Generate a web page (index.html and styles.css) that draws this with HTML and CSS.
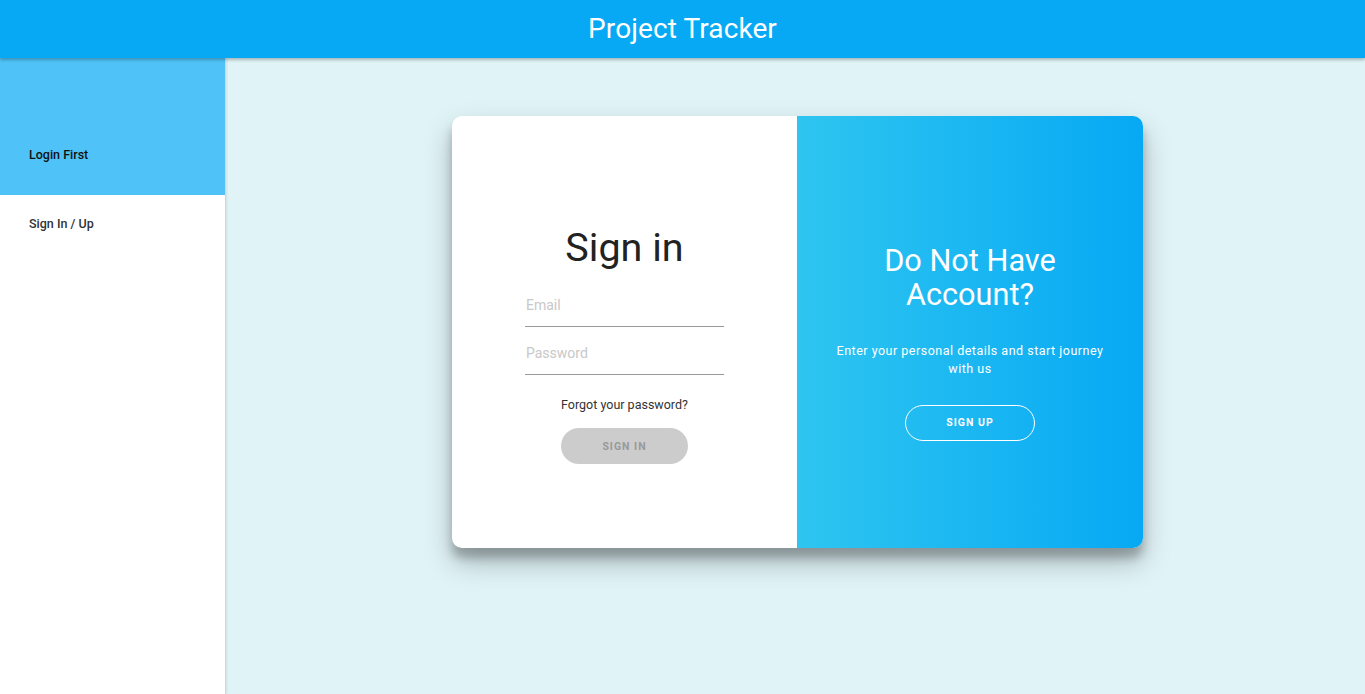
FILE: index.html
```html
<!DOCTYPE html>
<html>
<head>
<meta charset="utf-8">
<link rel="stylesheet" href="styles.css">
</head>
<body>
<header class="topbar"><h1 class="title">Project Tracker</h1></header>
<div class="layout">
  <nav class="sidebar">
    <div class="nav-item active">Login First</div>
    <div class="nav-item">Sign In / Up</div>
  </nav>
  <main class="main">
    <div class="card">
      <section class="panel-left">
        <h2 class="signin-title">Sign in</h2>
        <input class="field" type="email" placeholder="Email">
        <input class="field" type="password" placeholder="Password">
        <a class="forgot">Forgot your password?</a>
        <button class="btn-signin">SIGN IN</button>
      </section>
      <section class="panel-right">
        <h2 class="right-title">Do Not Have Account?</h2>
        <p class="right-text">Enter your personal details and start journey with us</p>
        <button class="btn-signup">SIGN UP</button>
      </section>
    </div>
  </main>
</div>
</body>
</html>
```
FILE: styles.css
```css
* { box-sizing: border-box; }
html, body { margin: 0; height: 100%; }
body {
  font-family: Roboto, "Liberation Sans", sans-serif;
  background: #e0f3f7;
  overflow: hidden;
}
.topbar {
  height: 58px;
  background: #07a9f4;
  display: flex;
  align-items: center;
  justify-content: center;
  box-shadow: 0 2px 3px rgba(0,0,0,0.25);
  position: relative;
  z-index: 2;
}
.title {
  margin: 0 0 2px;
  color: #fff;
  font-weight: 400;
  font-size: 28px;
  letter-spacing: 0.1px;
}
.layout {
  display: flex;
  height: calc(100% - 58px);
}
.sidebar {
  width: 226px;
  flex: none;
  background: #fff;
  border-right: 1px solid #d0d8da;
  box-shadow: 1px 0 2px rgba(0,0,0,0.08);
  position: relative;
  z-index: 1;
}
.nav-item {
  padding: 20px 29px;
  font-size: 12.5px;
  font-weight: 500;
  color: #333;
  line-height: 17px;
}
.nav-item.active {
  background: #4fc3f7;
  color: #111;
  padding-top: 88px;
  padding-bottom: 32px;
}
.main {
  flex: 1;
  padding-top: 58px;
  display: flex;
  justify-content: center;
  align-items: flex-start;
}
.card {
  width: 691px;
  height: 432px;
  border-radius: 10px;
  overflow: hidden;
  display: flex;
  background: #fff;
  box-shadow: 0 14px 28px rgba(0,0,0,0.25), 0 10px 10px rgba(0,0,0,0.22);
  margin-left: 4px;
}
.panel-left {
  width: 345px;
  display: flex;
  flex-direction: column;
  align-items: center;
  padding-top: 109px;
}
.signin-title {
  margin: 0 0 14px;
  font-size: 39.5px;
  font-weight: 400;
  color: #222;
  line-height: 46px;
}
.field {
  width: 199px;
  border: none;
  border-bottom: 1px solid #999;
  padding: 12px 0 12px 1px;
  margin-bottom: 0;
  font-family: inherit;
  font-size: 14px;
  line-height: 17px;
  outline: none;
  background: transparent;
  color: #333;
}
.field + .field { margin-top: 6px; }
.field::placeholder { color: #c8c8c8; }
.forgot {
  margin-top: 22px;
  font-size: 12.5px;
  color: #333;
  line-height: 16px;
}
.btn-signin {
  margin-top: 15px;
  width: 127px;
  height: 36px;
  border: none;
  border-radius: 18px;
  background: #cccccc;
  color: #999;
  font-family: inherit;
  font-size: 10.5px;
  font-weight: 700;
  letter-spacing: 1px;
}
.panel-right {
  width: 346px;
  background: linear-gradient(to right, #2ec5f0, #07a9f4);
  display: flex;
  flex-direction: column;
  align-items: center;
  padding: 128px 30px 0;
  color: #fff;
  text-align: center;
}
.right-title {
  margin: 0;
  width: 230px;
  font-size: 30.7px;
  font-weight: 400;
  line-height: 34px;
}
.right-text {
  margin: 30px 0 0;
  width: 280px;
  font-size: 12.5px;
  line-height: 18px;
  letter-spacing: 0.5px;
}
.btn-signup {
  margin-top: 27px;
  width: 130px;
  height: 36px;
  border: 1px solid #fff;
  border-radius: 18px;
  background: transparent;
  color: #fff;
  font-family: inherit;
  font-size: 10.5px;
  font-weight: 700;
  letter-spacing: 1px;
  padding-bottom: 2px;
}
```
